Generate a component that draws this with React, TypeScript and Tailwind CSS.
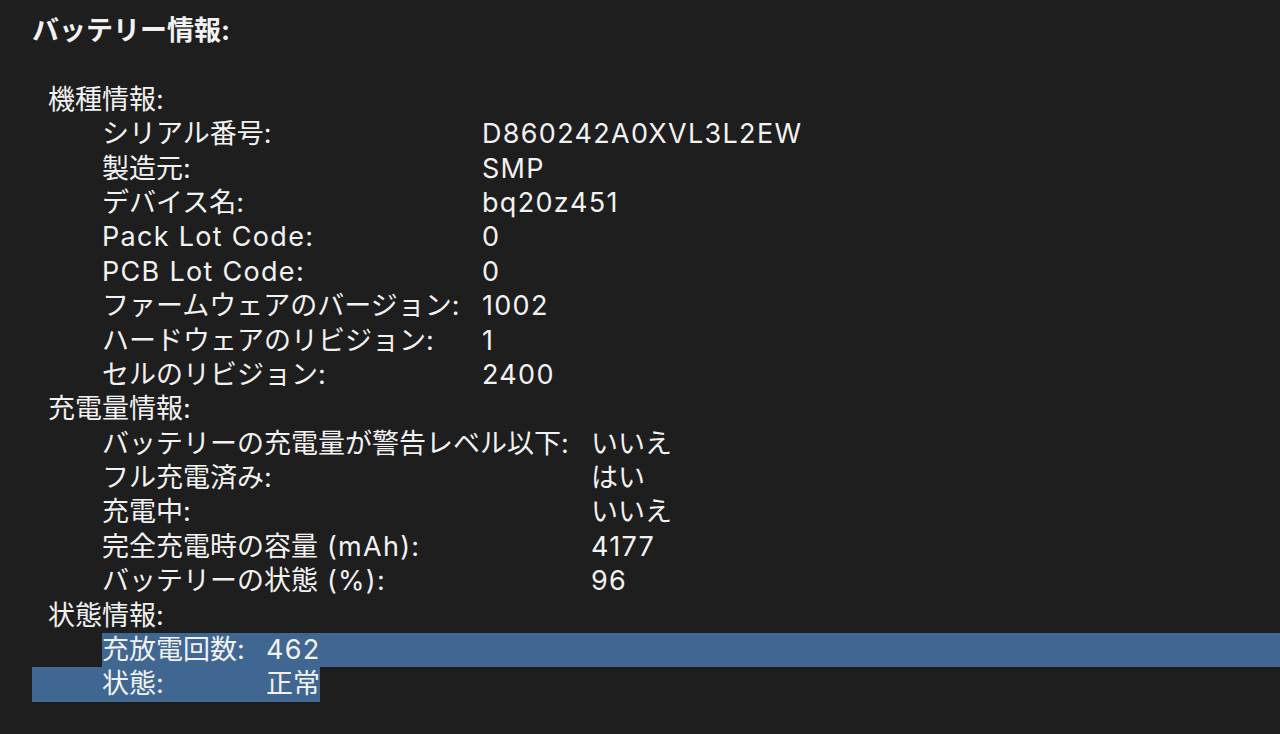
import React from 'react';

type Row = [React.ReactNode, React.ReactNode];

// Latin runs are a touch wider in the original UI font
const L = ({ children }: { children: React.ReactNode }) => <span className="tracking-[1.3px]">{children}</span>;

const modelInfo: Row[] = [
  ['シリアル番号:', <L>D860242A0XVL3L2EW</L>],
  ['製造元:', <L>SMP</L>],
  ['デバイス名:', <L>bq20z451</L>],
  [<L>Pack Lot Code:</L>, <L>0</L>],
  [<L>PCB Lot Code:</L>, <L>0</L>],
  ['ファームウェアのバージョン:', <L>1002</L>],
  ['ハードウェアのリビジョン:', <L>1</L>],
  ['セルのリビジョン:', <L>2400</L>],
];

const chargeInfo: Row[] = [
  ['バッテリーの充電量が警告レベル以下:', 'いいえ'],
  ['フル充電済み:', 'はい'],
  ['充電中:', 'いいえ'],
  [<>完全充電時の容量<L> (mAh):</L></>, <L>4177</L>],
  [<>バッテリーの状態<L> (%):</L></>, <L>96</L>],
];

const Line = ({ children, className = '' }: { children?: React.ReactNode; className?: string }) => (
  <div className={`h-[34.4px] leading-[34.4px] whitespace-nowrap ${className}`}>{children}</div>
);

const Section = ({ title, rows, labelWidth }: { title: string; rows: Row[]; labelWidth: string }) => (
  <>
    <Line className="pl-[16px]">{title}</Line>
    {rows.map(([label, value], i) => (
      <Line key={i} className="pl-[70px] flex">
        <span className={labelWidth}>{label}</span>
        <span>{value}</span>
      </Line>
    ))}
  </>
);

export default function App() {
  return (
    <div
      className="min-h-screen bg-[#1e1e1e] pt-[14px] pl-[32px] text-[27px] text-[#f2f2f2] antialiased"
      style={{ fontFamily: 'Inter, "Noto Sans CJK JP", sans-serif' }}
    >
      <Line className="font-bold">バッテリー情報:</Line>
      <Line />
      <Section title="機種情報:" rows={modelInfo} labelWidth="w-[380px]" />
      <Section title="充電量情報:" rows={chargeInfo} labelWidth="w-[489px]" />
      <Line className="pl-[16px]">状態情報:</Line>
      {/* selected text spans two lines */}
      <div className="flex h-[34.4px] leading-[34.4px] whitespace-nowrap">
        <span className="w-[70px] shrink-0" />
        <div className="flex flex-1 bg-[#3f6792]">
          <span className="w-[164px]">充放電回数:</span>
          <L>462</L>
        </div>
      </div>
      <div className="flex">
        <div className="flex h-[34.4px] leading-[34.4px] whitespace-nowrap bg-[#3f6792] pl-[70px]">
          <span className="w-[164px]">状態:</span>
          <span>正常</span>
        </div>
      </div>
    </div>
  );
}
